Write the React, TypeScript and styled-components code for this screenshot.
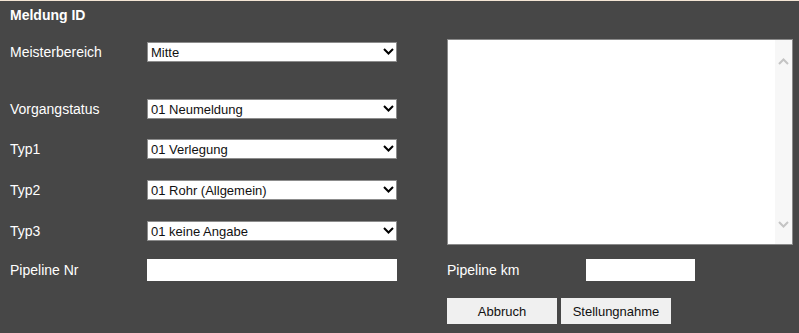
import React from "react";
import styled, { createGlobalStyle } from "styled-components";

const GlobalStyle = createGlobalStyle`
  html, body { margin: 0; padding: 0; background: #474747; }
  body { font-family: "Liberation Sans", Arial, sans-serif; }
  * { box-sizing: border-box; }
`;

const Page = styled.div`
  width: 799px;
  height: 333px;
  background: #474747;
  overflow: hidden;
`;

const TopEdge = styled.div`
  height: 1px;
  background: #f3e5d4;
`;

const Title = styled.div`
  margin-top: 6px;
  padding-left: 10px;
  font-size: 14px;
  line-height: 16px;
  font-weight: bold;
  color: #ffffff;
`;

const Body = styled.div`
  display: flex;
  margin-top: 16px;
  padding-left: 10px;
`;

const LeftCol = styled.div`
  width: 387px;
  padding-top: 3px;
  display: flex;
  flex-direction: column;
`;

const Row = styled.div<{ $top: number; $h?: number }>`
  display: grid;
  grid-template-columns: 137px 250px;
  align-items: center;
  margin-top: ${(p) => p.$top}px;
  height: ${(p) => p.$h ?? 20}px;
`;

const Label = styled.label`
  font-size: 14px;
  color: #ffffff;
  white-space: nowrap;
`;

const SelectWrap = styled.div`
  position: relative;
  height: 20px;
`;

const Select = styled.select`
  appearance: none;
  -webkit-appearance: none;
  width: 100%;
  height: 20px;
  margin: 0;
  border: 1px solid #8c8c8c;
  border-radius: 0;
  background: #ffffff;
  padding: 0 20px 0 3px;
  font-family: "Liberation Sans", Arial, sans-serif;
  font-size: 13px;
  color: #111111;
  outline: none;
`;

const Chevron = styled.svg`
  position: absolute;
  right: 3px;
  top: 6px;
  pointer-events: none;
`;

const TextInput = styled.input<{ $w?: number }>`
  width: ${(p) => (p.$w ? `${p.$w}px` : "100%")};
  height: 22px;
  margin: 0;
  border: none;
  border-radius: 0;
  background: #ffffff;
  padding: 0 3px;
  font-family: "Liberation Sans", Arial, sans-serif;
  font-size: 13px;
  outline: none;
`;

const RightCol = styled.div`
  margin-left: 50px;
  width: 346px;
  display: flex;
  flex-direction: column;
`;

const TextBox = styled.div`
  display: flex;
  height: 206px;
  border: 1px solid #8a8a8a;
  background: #ffffff;
`;

const Area = styled.textarea`
  flex: 1;
  border: none;
  resize: none;
  outline: none;
  margin: 0;
  padding: 2px;
  font-family: "Liberation Sans", Arial, sans-serif;
  font-size: 13px;
  overflow: hidden;
  background: #ffffff;
`;

const ScrollTrack = styled.div`
  width: 17px;
  background: #f7f7f7;
  display: flex;
  flex-direction: column;
  justify-content: space-between;
  align-items: center;
  padding: 18px 0 16px;
`;

const KmRow = styled.div`
  display: grid;
  grid-template-columns: 139px 109px;
  align-items: center;
  margin-top: 14px;
  height: 22px;
`;

const Buttons = styled.div`
  display: flex;
  gap: 4px;
  margin-top: 17px;
`;

const Button = styled.button`
  width: 110px;
  height: 26px;
  margin: 0;
  border: none;
  border-radius: 0;
  background: #f0f0f0;
  font-family: "Liberation Sans", Arial, sans-serif;
  font-size: 13px;
  color: #111111;
  padding: 0;
`;

const ChevronDown = () => (
  <Chevron width="11" height="7" viewBox="0 0 11 7">
    <path d="M1 1 L5.5 5.5 L10 1" fill="none" stroke="#000" strokeWidth="2" />
  </Chevron>
);

const ScrollArrow = ({ up }: { up?: boolean }) => (
  <svg width="11" height="7" viewBox="0 0 11 7">
    <path
      d={up ? "M1 6 L5.5 1.5 L10 6" : "M1 1 L5.5 5.5 L10 1"}
      fill="none"
      stroke="#c4c4c4"
      strokeWidth="2"
    />
  </svg>
);

const SelectField = ({ value }: { value: string }) => (
  <SelectWrap>
    <Select defaultValue={value}>
      <option value={value}>{value}</option>
    </Select>
    <ChevronDown />
  </SelectWrap>
);

const selects: { label: string; value: string; top: number }[] = [
  { label: "Meisterbereich", value: "Mitte", top: 0 },
  { label: "Vorgangstatus", value: "01 Neumeldung", top: 37 },
  { label: "Typ1", value: "01 Verlegung", top: 20 },
  { label: "Typ2", value: "01 Rohr (Allgemein)", top: 21 },
  { label: "Typ3", value: "01 keine Angabe", top: 21 },
];

export default function App() {
  return (
    <Page>
      <GlobalStyle />
      <TopEdge />
      <Title>Meldung ID</Title>
      <Body>
        <LeftCol>
          {selects.map((s) => (
            <Row key={s.label} $top={s.top}>
              <Label>{s.label}</Label>
              <SelectField value={s.value} />
            </Row>
          ))}
          <Row $top={18} $h={22}>
            <Label>Pipeline Nr</Label>
            <TextInput />
          </Row>
        </LeftCol>
        <RightCol>
          <TextBox>
            <Area />
            <ScrollTrack>
              <ScrollArrow up />
              <ScrollArrow />
            </ScrollTrack>
          </TextBox>
          <KmRow>
            <Label>Pipeline km</Label>
            <TextInput $w={109} />
          </KmRow>
          <Buttons>
            <Button>Abbruch</Button>
            <Button>Stellungnahme</Button>
          </Buttons>
        </RightCol>
      </Body>
    </Page>
  );
}
